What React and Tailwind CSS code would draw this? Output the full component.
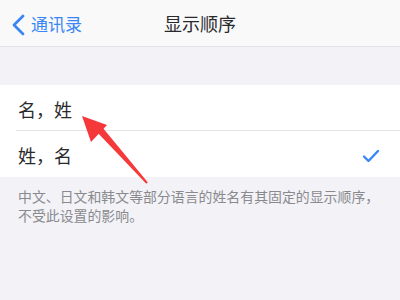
export default function App() {
  const font = { fontFamily: '"Noto Sans CJK SC", "Noto Sans", sans-serif' };
  return (
    <div className="relative w-[400px] h-[300px] overflow-hidden bg-[#f2f2f7]" style={font}>
      {/* Nav bar */}
      <div className="relative h-[47px] bg-[#f9f9fa] border-b border-[#e2e2e6] flex items-center">
        <div className="flex items-center pl-[10px] text-[#3a86f5]">
          <svg width="16" height="22" viewBox="0 0 16 22" className="mt-[3px]">
            <path d="M13 2 L4 11 L13 20" fill="none" stroke="#3a86f5" strokeWidth="2.8" strokeLinecap="round" strokeLinejoin="round" />
          </svg>
          <span className="ml-[5px] text-[17px] leading-none mt-[1px]">通讯录</span>
        </div>
        <div className="absolute inset-0 flex items-center justify-center pointer-events-none">
          <span className="text-[18px] leading-none text-[#2a2a2c]">显示顺序</span>
        </div>
      </div>

      {/* Spacer */}
      <div className="h-[38px]" />

      {/* List */}
      <div className="bg-white">
        <div className="h-[45px] flex items-center pl-[18px] pt-[3px] text-[18px] text-[#2a2a2c]">名，姓</div>
        <div className="ml-[16px] h-px bg-[#e4e4e8]" />
        <div className="h-[46px] flex items-center justify-between pl-[18px] pr-[20px] pt-[3px] text-[18px] text-[#2a2a2c]">
          <span>姓，名</span>
          <svg width="18" height="14" viewBox="0 0 18 14">
            <path d="M2 7.5 L6.5 12 L16 2" fill="none" stroke="#3a86f5" strokeWidth="2.4" strokeLinecap="round" strokeLinejoin="round" />
          </svg>
        </div>
      </div>

      {/* Footer */}
      <p className="pl-[18px] pr-[4px] pt-[10px] text-[13.9px] leading-[19px] text-[#8a8a8e] whitespace-nowrap">
        中文、日文和韩文等部分语言的姓名有其固定的显示顺序，
        <br />
        不受此设置的影响。
      </p>

      {/* Red arrow annotation */}
      <svg className="absolute left-0 top-0 pointer-events-none" width="400" height="300" viewBox="0 0 400 300">
        <polygon points="147.7,182.3 146.3,183.7 97.4,132.4 102.5,127.6" fill="#f5383a" />
        <polygon points="82,116 107,125 91,142" fill="#f5383a" />
      </svg>
    </div>
  );
}
